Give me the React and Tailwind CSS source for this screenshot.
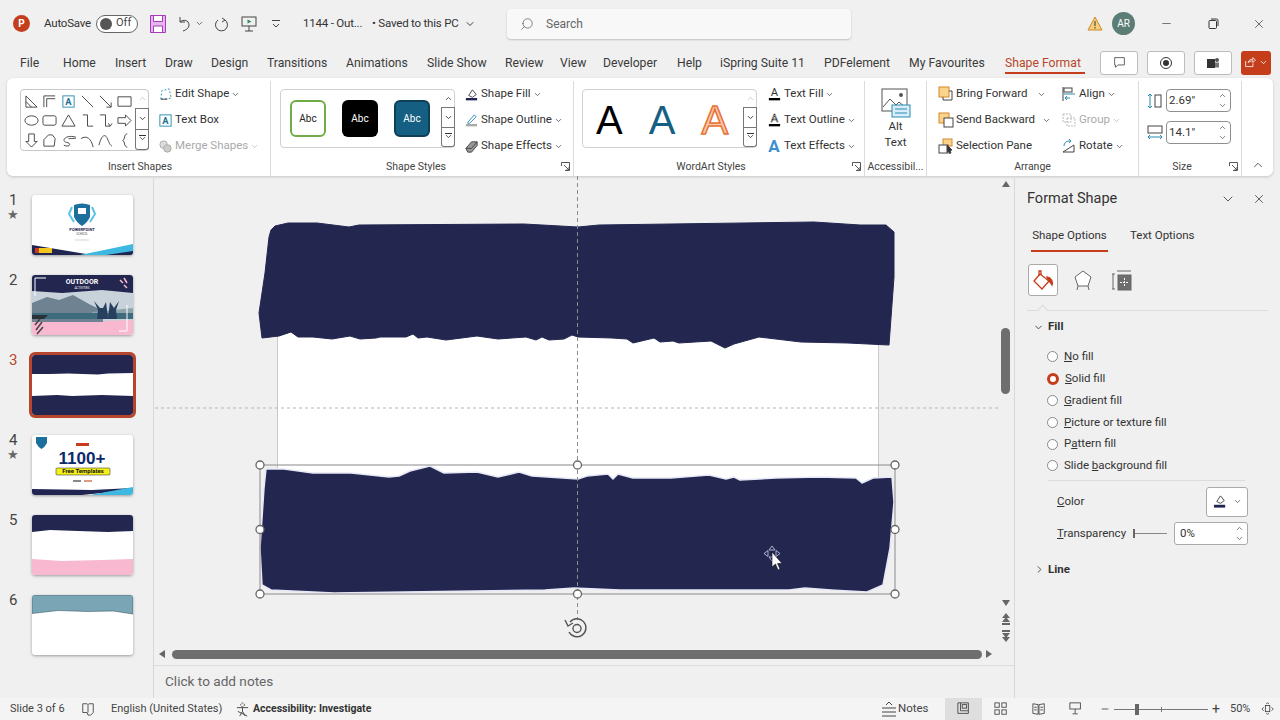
import React from 'react';
import { ChevronDown, ChevronRight, ChevronUp, X, Minus, Search } from 'lucide-react';

const font = { fontFamily: 'Roboto, "Noto Sans", sans-serif' };

// small line icon on a 16 box
const Ic = ({ s = 16, className = '', children, vb = '0 0 16 16' }) => (
  <svg width={s} height={s} viewBox={vb} fill="none" stroke="#444" strokeWidth="1" className={`shrink-0 ${className}`}>{children}</svg>
);

const Caret = ({ className = 'text-[#555]' }) => <ChevronDown size={9} strokeWidth={2.2} className={`shrink-0 ${className}`} />;

const tabs = [
  ['File', 43], ['Home', 52], ['Insert', 50], ['Draw', 46], ['Design', 56], ['Transitions', 79], ['Animations', 81], ['Slide Show', 78],
  ['Review', 55], ['View', 43], ['Developer', 74], ['Help', 43], ['iSpring Suite 11', 104], ['PDFelement', 85], ['My Favourites', 96],
];

const shapePaths = [
  'M2 2v12h12z M2 8l6 6', 'M2 14V2h12 M5 14V5h9', null, 'M2 2l12 12', 'M2 2l12 12 M14 9v5H9', 'M1 3h14v10H1z',
  'M1 8a7 5 0 1 0 14 0a7 5 0 1 0-14 0', 'M1 5q0-2 2-2h10q2 0 2 2v6q0 2-2 2H3q-2 0-2-2z', 'M8 2l7 12H1z', 'M3 2h5v12h6', 'M2 2h6v12h5 M11 11l2 3 2-3', 'M1 5h8V2l6 6-6 6v-3H1z',
  'M5 1h6v8h3l-6 6-6-6h3z', 'M2 14V7l5-5h4l3 4-1 8z', 'M3 13c6 3 9-2 3-3s-2-8 8-6-6 2-6 2', 'M1 6c6-4 11 0 13 9', 'M1 13C4 1 8 1 10 6s3 7 5 8', 'M11 1C7 1 9 7 6 8c3 1 1 7 5 7',
];

const ShapeGallery = () => (
  <div className="flex w-[129px] h-[62px] bg-white border border-[#c8c8c8] rounded-[4px]">
    <div className="grid grid-cols-6 w-[113px] pl-[1px] pt-[2px]">
      {shapePaths.map((d, i) => (
        <div key={i} className="flex items-center justify-center h-[19px]">
          {d ? (
            <Ic s={15}><path d={d} /></Ic>
          ) : (
            <Ic s={15}>
              <rect x="2" y="2" width="12" height="12" stroke="#2b8cb0" />
              <text x="8" y="12" fontSize="10" textAnchor="middle" fill="#1d6f93" stroke="none" fontWeight="700">A</text>
            </Ic>
          )}
        </div>
      ))}
    </div>
    <GalleryScroll />
  </div>
);

const GalleryScroll = ({ big }) => (
  <div className="flex flex-col w-[14px] ml-auto mr-[-1px] mt-[-1px]">
    <div className="flex-1 flex items-center justify-center"><ChevronUp size={9} strokeWidth={2} className={big ? 'text-[#333]' : 'text-[#bbb]'} /></div>
    <div className="flex-1 flex items-center justify-center border border-[#777] bg-white"><ChevronDown size={9} strokeWidth={2.4} className="text-[#333]" /></div>
    <div className="flex-1 flex flex-col items-center justify-center border border-t-0 border-[#777] bg-white rounded-b-[3px]">
      <div className="w-[7px] h-[1px] bg-[#333] mb-[1px]" />
      <ChevronDown size={9} strokeWidth={2.2} className="text-[#333] -mt-[3px]" />
    </div>
  </div>
);

const Launcher = () => (
  <svg width="9" height="9" viewBox="0 0 9 9" fill="none" stroke="#555" className="shrink-0">
    <path d="M.5 4V.5H8.500V8.500H4M3 3l5 5M8 5v3H5" />
  </svg>
);

const Tool = ({ icon, label, muted, chevron = true }) => (
  <div className={`flex items-center shrink-0 h-[26px] text-[11.5px] ${muted ? 'text-[#aaa]' : 'text-[#333]'}`}>
    <span className="w-[18px] flex justify-center shrink-0">{icon}</span>
    <span className="ml-[1px]">{label}</span>
    {chevron && <Caret className={`ml-[2px] ${muted ? 'text-[#bbb]' : 'text-[#555]'}`} />}
  </div>
);

const Group = ({ w, label, children, launcher, labelClass = '' }) => (
  <div style={{ width: w }} className="relative flex flex-col shrink-0 border-r border-[#dcdcdc] mt-[3px] last:border-r-0">
    <div className="flex-1 flex min-h-0">{children}</div>
    <div className={`h-[19px] flex items-center justify-center text-[10.5px] text-[#444] ${labelClass}`}>{label}</div>
    {launcher && <div className="absolute right-[3px] bottom-[5px]"><Launcher /></div>}
  </div>
);

const Stepper = () => (
  <div className="flex flex-col ml-auto mr-[3px] text-[#555]">
    <ChevronUp size={9} strokeWidth={2} />
    <ChevronDown size={9} strokeWidth={2} className="mt-[1px]" />
  </div>
);

const SizeField = ({ value, icon }) => (
  <div className="flex items-center gap-[3px]">
    {icon}
    <div className="flex items-center w-[65px] h-[23px] bg-white border border-[#8f8f8f] rounded-[4px] pl-[2px] text-[11.5px] text-[#333]">
      {value}<Stepper />
    </div>
  </div>
);

const TextIcon = ({ bar, outline }) => (
  <Ic s={15}>
    <text x="8" y="10" fontSize="12" textAnchor="middle" fill={outline ? '#fff' : '#333'} stroke={outline ? '#333' : 'none'} strokeWidth=".6">A</text>
    <path d="M2 13h12" stroke={bar} strokeWidth="2.5" />
  </Ic>
);

const Ribbon = () => (
  <div className="flex h-[98px] mx-[7px] bg-white rounded-[6px] shadow-[0_1px_3px_rgba(0,0,0,0.18)] shrink-0">
    <Group w={264} label="Insert Shapes" labelClass="pl-[3px]">
      <div className="flex pt-[8px] pl-[13px]">
        <ShapeGallery />
        <div className="flex flex-col ml-[7px] mt-[-8px]">
          <Tool label="Edit Shape" icon={<Ic s={15}><path d="M3 13l1-9 8-2 2 10z" strokeDasharray="2 2" stroke="#2b8cb0" /><path d="M3 13h7" /></Ic>} />
          <Tool label="Text Box" chevron={false} icon={<Ic s={15}><rect x="2" y="2" width="12" height="12" stroke="#2b8cb0" /><text x="8" y="12" fontSize="10" textAnchor="middle" fill="#1d6f93" stroke="none" fontWeight="700">A</text></Ic>} />
          <Tool label="Merge Shapes" muted icon={<Ic s={15}><circle cx="6" cy="6" r="4" stroke="#aaa" fill="#ddd" /><circle cx="10" cy="10" r="4" stroke="#aaa" fill="#ccc" /></Ic>} />
        </div>
      </div>
    </Group>
    <Group w={303} label="Shape Styles" labelClass="pr-[12px]" launcher>
      <div className="flex pt-[8px] pl-[9px]">
        <div className="flex w-[175px] h-[59px] bg-white border border-[#d0d0d0] rounded-[4px]">
          <div className="flex items-center gap-[16px] pl-[9px]">
            <div className="flex items-center justify-center w-[36px] h-[37px] rounded-[6px] border-2 border-[#70ad47] text-[10px] text-[#222]">Abc</div>
            <div className="flex items-center justify-center w-[36px] h-[37px] rounded-[6px] bg-black text-[10px] text-white">Abc</div>
            <div className="flex items-center justify-center w-[36px] h-[37px] rounded-[6px] bg-[#156082] border-2 border-[#0e3f56] text-[10px] text-white">Abc</div>
          </div>
          <GalleryScroll big />
        </div>
        <div className="flex flex-col ml-[7px] mt-[-8px]">
          <Tool label="Shape Fill" icon={<Ic s={15}><path d="M5 9l4-6 4 5-4 3z" /><path d="M2 13h12" stroke="#1f2550" strokeWidth="2.5" /></Ic>} />
          <Tool label="Shape Outline" icon={<Ic s={15}><path d="M4 10l7-8 2 2-7 7H4z" stroke="#2b8cb0" /><path d="M2 13h12" stroke="#aaa" strokeWidth="2.5" /></Ic>} />
          <Tool label="Shape Effects" icon={<Ic s={15}><path d="M2 10l6-7h6v4l-6 7H4z" fill="#999" /><path d="M2 10h6l6-7" /></Ic>} />
        </div>
      </div>
    </Group>
    <Group w={291} label="WordArt Styles" labelClass="pr-[16px]" launcher>
      <div className="flex pt-[8px] pl-[8px]">
        <div className="flex w-[175px] h-[59px] bg-white border border-[#d0d0d0] rounded-[4px]">
          <div className="flex items-center h-[59px] text-[40px] leading-none pl-[13px] gap-[26px]" style={{ fontFamily: '"Liberation Sans", sans-serif' }}>
            <span className="text-black">A</span>
            <span className="text-[#156082]">A</span>
            <span className="text-[#f8c9ae] [-webkit-text-stroke:1.5px_#e97132]">A</span>
          </div>
          <GalleryScroll />
        </div>
        <div className="flex flex-col ml-[8px] mt-[-8px]">
          <Tool label="Text Fill" icon={<TextIcon bar="#000" />} />
          <Tool label="Text Outline" icon={<TextIcon bar="#000" outline />} />
          <Tool label="Text Effects" icon={<span className="text-[17px] leading-none font-bold text-[#3d8fd1]">A</span>} />
        </div>
      </div>
    </Group>
    <Group w={62} label="Accessibil...">
      <div className="flex flex-col items-center w-full pt-[7px]">
        <Ic s={30} vb="0 0 30 30">
          <rect x="1" y="1" width="25" height="22" stroke="#555" fill="#fff" />
          <path d="M2 19l7-8 6 6 3-3 6 5" stroke="#555" />
          <circle cx="20" cy="7" r="2" fill="#555" stroke="none" />
          <rect x="11" y="17" width="18" height="12" fill="#d8ecf9" stroke="#2b8cb0" />
          <path d="M14 21h12M14 25h12" stroke="#2b8cb0" />
        </Ic>
        <div className="text-[11.5px] leading-[16px] text-[#333] text-center">Alt<br />Text</div>
      </div>
    </Group>
    <Group w={212} label="Arrange">
      <div className="flex pl-[10px]">
        <div className="flex flex-col w-[123px]">
          <div className="flex items-center"><Tool chevron={false} label="Bring Forward" icon={<Ic s={16}><rect x="1" y="1" width="10" height="10" fill="#fbd38b" stroke="#d18a2a" /><path d="M11 5h3v9H5v-3" /></Ic>} /><Caret className="ml-[10px] text-[#555]" /></div>
          <div className="flex items-center"><Tool chevron={false} label="Send Backward" icon={<Ic s={16}><rect x="1" y="1" width="10" height="10" fill="#fbd38b" stroke="#d18a2a" /><rect x="6" y="6" width="9" height="9" fill="#fff" /></Ic>} /><Caret className="ml-[7px] text-[#555]" /></div>
          <Tool chevron={false} label="Selection Pane" icon={<Ic s={16}><rect x="5" y="1" width="9" height="7" fill="#fbd38b" stroke="#d18a2a" /><rect x="1" y="7" width="9" height="8" fill="#fff" /><path d="M9 7l5 5-2 .5 1 2.500-1.500.5-1-2.500-1.500 1.500z" fill="#333" /></Ic>} />
        </div>
        <div className="flex flex-col">
          <Tool label="Align" icon={<Ic s={16}><path d="M2 1v14" /><rect x="3" y="2" width="8" height="4" /><path d="M3 8h11" stroke="#2b8cb0" /><path d="M9 12H4l2-2M4 12l2 2" stroke="#2b8cb0" /></Ic>} />
          <Tool label="Group" muted icon={<Ic s={16}><rect x="2" y="2" width="8" height="8" stroke="#bbb" strokeDasharray="2 1" /><rect x="6" y="6" width="8" height="8" stroke="#bbb" strokeDasharray="2 1" /></Ic>} />
          <Tool label="Rotate" icon={<Ic s={16}><path d="M2 14l11-7v7z" /><path d="M3 8a5 5 0 0 1 5-5h2M8 1l2 2-2 2" stroke="#2b8cb0" /></Ic>} />
        </div>
      </div>
    </Group>
    <Group w={103} label="Size" labelClass="pr-[16px]" launcher>
      <div className="flex flex-col pt-[8px] pl-[8px] gap-[9px]">
        <SizeField value={'2.69"'} icon={<Ic s={16}><path d="M3 1v14M1 3l2-2 2 2M1 13l2 2 2-2" stroke="#2b8cb0" /><rect x="8" y="2" width="6" height="12" /></Ic>} />
        <SizeField value={'14.1"'} icon={<Ic s={16}><rect x="1" y="1" width="14" height="7" /><path d="M1 12h14M3 10l-2 2 2 2M13 10l2 2-2 2" stroke="#2b8cb0" /></Ic>} />
      </div>
    </Group>
    <div className="flex-1 flex items-end justify-center pb-[4px]"><ChevronUp size={14} strokeWidth={1.5} className="text-[#444]" /></div>
  </div>
);

const TitleBar = () => (
  <div className="flex items-center h-[47px] shrink-0 text-[11.5px] text-[#333]">
    <div className="flex items-center justify-center ml-[13px] w-[17px] h-[17px] rounded-full bg-[#c43e1c] text-white text-[10px] font-bold">P</div>
    <span className="ml-[14px] w-[45px] tracking-[-0.2px]">AutoSave</span>
    <div className="flex items-center ml-[7px] w-[42px] h-[18px] rounded-full border border-[#666] bg-white pl-[3px]">
      <span className="w-[12px] h-[12px] rounded-full bg-[#555]" />
      <span className="ml-[4px] text-[11px] text-[#444]">Off</span>
    </div>
    <svg width="16" height="18" viewBox="0 0 16 18" className="ml-[12px] shrink-0" fill="none"><path d="M.5.5h15v17H.5z" fill="#e7b5ee" stroke="#a33cb8" /><path d="M3.500.5h9v6h-9zM3.500 11h9v6.500h-9z" fill="#fff" stroke="#a33cb8" /></svg>
    <Ic s={16} className="ml-[10px]"><path d="M4 1v5h5" /><path d="M4 6c3-3 9-2 9 3 0 3-3 5-6 6" /></Ic>
    <Caret className="ml-[3px] text-[#555]" />
    <Ic s={16} className="ml-[9px]"><path d="M9 2l3 2-3 2" /><path d="M12 4a6 6 0 1 1-7 0" /></Ic>
    <Ic s={16} className="ml-[12px]"><rect x="1" y="1" width="14" height="9" /><path d="M8 10v5M4 15h8" /><path d="M6.500 3.500l4 2-4 2z" fill="#2d8a5a" stroke="none" /></Ic>
    <svg width="10" height="10" viewBox="0 0 10 10" fill="none" stroke="#444" className="ml-[14px] shrink-0"><path d="M1 1.500h8M2 5l3 3 3-3" /></svg>
    <span className="ml-[22px] w-[59px] tracking-[-0.2px]">1144 - Out...</span>
    <span className="ml-[10px] w-[90px] tracking-[-0.2px]">• Saved to this PC</span>
    <ChevronDown size={12} className="ml-[2px] text-[#444]" />
    <div className="flex items-center ml-[31px] w-[344px] h-[30px] bg-[#f8f8f8] rounded-[4px] shadow-[0_1px_2px_rgba(0,0,0,0.2)] pl-[13px] text-[#666]">
      <Search size={14} strokeWidth={1.2} className="-scale-x-100 text-[#555]" />
      <span className="ml-[12px] text-[12px]">Search</span>
    </div>
    <svg width="16" height="15" viewBox="0 0 16 15" className="ml-[236px] shrink-0"><path d="M8 1l7 13H1z" fill="#f7cf7a" stroke="#c98a2a" /><path d="M8 5v5M8 11v1.500" stroke="#333" /></svg>
    <div className="flex items-center justify-center ml-[9px] w-[23px] h-[23px] rounded-full bg-[#5c7d75] text-white text-[10px]">AR</div>
    <Minus size={13} strokeWidth={1.2} className="ml-[25px] text-[#333]" />
    <svg width="11" height="11" viewBox="0 0 11 11" fill="none" stroke="#333" className="ml-[35px] shrink-0"><rect x="1" y="2.500" width="7.500" height="8" rx="1" /><path d="M3 1h5.500a1.500 1.500 0 0 1 1.500 1.500V8" /></svg>
    <X size={14} strokeWidth={1.2} className="ml-[33px] text-[#333]" />
  </div>
);

const ActionBtn = ({ children }) => (
  <div className="flex items-center justify-center w-[38px] h-[24px] bg-white border border-[#bdbdbd] rounded-[3px]">{children}</div>
);

const TabsRow = () => (
  <div className="flex items-center h-[31px] shrink-0 pl-[20px] text-[12.2px] text-[#3a3a3a]">
    {tabs.map(([t, w]) => (
      <span key={t} style={{ width: w }} className="mt-[1px]">{t}</span>
    ))}
    <span className="relative w-[80px] mt-[1px] text-[#b7472a]">
      Shape Format
      <span className="absolute left-0 right-0 top-[18px] h-[2px] bg-[#c43e1c]" />
    </span>
    <div className="flex items-center gap-[9px] ml-[15px]">
      <ActionBtn><Ic s={13}><path d="M2 2h12v9H6l-3 3v-3H2z" /></Ic></ActionBtn>
      <ActionBtn><span className="flex items-center justify-center w-[12px] h-[12px] rounded-full border border-[#333]"><span className="w-[6px] h-[6px] rounded-full bg-[#333]" /></span></ActionBtn>
      <ActionBtn><svg width="14" height="14" viewBox="0 0 14 14"><rect x="1" y="3" width="8" height="9" fill="#333" /><circle cx="11" cy="4" r="2" fill="#555" /><rect x="9" y="6.500" width="4" height="5" fill="#777" /></svg></ActionBtn>
      <div className="flex items-center justify-center gap-[2px] w-[30px] h-[24px] rounded-[3px] bg-[#c43e1c]">
        <Ic s={13}><path d="M2 6v7h9V9M5 8c1-3 3-4 6-4V2l3 3-3 3V6c-3 0-4 1-6 2z" stroke="#fff" /></Ic>
        <Caret className="text-white" />
      </div>
    </div>
  </div>
);

const Thumb = ({ n, star, active, children }) => (
  <div className="flex h-[60px]">
    <div className="w-[32px] pl-[9px] text-[15px] leading-[18px] mt-[-4px]">
      <div className={active ? 'text-[#b7472a]' : 'text-[#444]'}>{n}</div>
      {star && <div className="text-[13px] leading-[11px] text-[#666] ml-[-2px]">★</div>}
    </div>
    <div className={`w-[101px] h-[60px] rounded-[3px] bg-white overflow-hidden shadow-[0_1px_3px_rgba(0,0,0,0.35)] ${active ? 'outline-[3px] outline-[#b5452c]' : ''}`}>
      <svg width="101" height="60" viewBox="0 0 101 60">{children}</svg>
    </div>
  </div>
);

const Thumbnails = () => (
  <div className="flex flex-col w-[154px] shrink-0 gap-[20px] pt-[19px] border-r border-[#d8d8d8]">
    <Thumb n={1} star>
      <path d="M42 10q8-3 16 0v12q-3 6-8 9-5-3-8-9z" fill="#1d6f9c" />
      <path d="M40 12l-3 7 5 8M60 12l3 7-5 8" stroke="#5cc3e8" fill="none" strokeWidth="2" />
      <rect x="46" y="13" width="8" height="6" fill="#fff" />
      <text x="50" y="36" fontSize="4" fontWeight="700" textAnchor="middle" fill="#1f2550">POWERPOINT</text>
      <text x="50" y="40" fontSize="3" textAnchor="middle" fill="#555">SCHOOL</text>
      <path d="M43 45h14" stroke="#aaa" strokeWidth=".5" />
      <path d="M0 50l60 10H0z" fill="#1f2550" />
      <path d="M101 49v11H48z" fill="#3eb8e0" />
      <path d="M101 56v4H74z" fill="#1f2550" />
      <rect x="3" y="53" width="17" height="5" fill="#f2c61f" />
      <rect x="3" y="53" width="4" height="5" fill="#c83b1d" />
    </Thumb>
    <Thumb n={2}>
      <rect width="101" height="60" fill="#fff" />
      <rect width="101" height="22" fill="#23264f" />
      <rect y="44" width="101" height="16" fill="#f8b8d0" />
      <path d="M0 16l30 2 40-3 31 3v27l-30 1-40-1-31 1z" fill="#c7d2da" />
      <path d="M0 28l15-6 12 3 14-5 16 9 14 7v11H0z" fill="#6f8291" />
      <path d="M60 37l41-4v7H60z" fill="#8fa3ad" />
      <path d="M0 38h101v6H0z" fill="#3f6c7d" />
      <path d="M0 44h12l4-4H0z" fill="#2a3138" />
      <path d="M65 44l1-9-4-9 6 7 3 0 3-6 1 8 1 9zM76 44l1-9 1-8 4 6 5-7-3 9 1 9z" fill="#28405f" />
      <text x="50" y="9" fontSize="7" fontWeight="700" textAnchor="middle" fill="#fff">OUTDOOR</text>
      <text x="50" y="13.500" fontSize="3" textAnchor="middle" fill="#fff">ACTIVITIES</text>
      <path d="M14 3H3v18" stroke="#fff" fill="none" />
      <path d="M95 30v26H87" stroke="#fff" fill="none" />
      <path d="M88 5l3 3M92 3l3 5M92 10l3 3" stroke="#f8b8d0" strokeWidth="1.500" />
      <path d="M3 50l5-6M4 55l6-8M5 59l6-7" stroke="#444" strokeWidth="1.500" />
    </Thumb>
    <Thumb n={3} active>
      <rect width="101" height="60" fill="#fff" />
      <path d="M0 0h101v18l-25 .5-10 1-30-1-18 .5H0z" fill="#23264f" />
      <path d="M0 41l25-1 15 1 30-1 31 1v19H0z" fill="#23264f" />
    </Thumb>
    <Thumb n={4} star>
      <path d="M4 2h11v6q-2 4-5.500 6Q6 12 4 8z" fill="#1d6f9c" />
      <rect x="44" y="8" width="13" height="3" fill="#c83b1d" />
      <text x="50" y="29" fontSize="17" fontWeight="900" textAnchor="middle" fill="#0b2a6b" style={{ fontFamily: '"Liberation Sans", sans-serif' }}>1100+</text>
      <rect x="24" y="33" width="54" height="7" rx="1" fill="#f3f01c" stroke="#222" strokeWidth=".5" />
      <text x="51" y="38.300" fontSize="6" fontWeight="700" textAnchor="middle" fill="#111">Free Templates</text>
      <rect x="41" y="45" width="8" height="2" fill="#888" /><rect x="52" y="45" width="8" height="2" fill="#d98" />
      <path d="M0 54l60 1 41-2v2L50 60H0z" fill="#1f2550" />
      <path d="M101 52v8H58z" fill="#3eb8e0" />
    </Thumb>
    <Thumb n={5}>
      <path d="M0 0h101v16l-25 1-30-1-28-1-18 2z" fill="#23264f" />
      <path d="M0 44l30 2 40-1 31-1v16H0z" fill="#f8b8d0" />
    </Thumb>
    <Thumb n={6}>
      <path d="M0 0h101v19l-20-3-25 .5-30-1-26 3z" fill="#7aa5b5" stroke="#2a4a55" strokeWidth=".5" />
    </Thumb>
  </div>
);

const topShape = 'M271 230L275 226 288 223 317 223 349 227 359 225 524 224 578 227 599 225 814 222 860 225 886 225 894 232 894 277 889 345 848 343 801 342 759 337 734 344 725 348 711 341 679 343 673 341 660 342 654 338 633 343 627 339 612 338 578 337 572 335 564 339 549 340 542 337 536 340 526 337 498 339 477 336 446 340 427 337 418 338 413 334 406 337 380 337 376 338 360 339 350 336 332 339 313 337 298 337 291 332 279 336 262 338 259 313 265 273 269 237Z';
const bottomShape = 'M266 469L284 469 313 473 351 473 389 477 399 476 410 471 430 466 444 473 477 472 498 477 519 472 532 476 578 479 587 476 608 474 613 479 618 474 633 478 671 478 709 475 726 479 734 477 740 480 776 478 818 477 856 478 862 483 873 478 892 477 894 502 890 548 883 585 867 592 831 590 805 588 789 590 620 590 574 588 545 590 334 593 271 590 262 585 260 548 264 488Z';

const handles = [[260, 465], [577.5, 465], [895, 465], [260, 529.5], [895, 529.5], [260, 594], [577.5, 594], [895, 594]];

const Stage = () => (
  <div className="relative flex-1 overflow-hidden">
    <div className="absolute left-[123px] top-[62px] w-[602px] h-[338px] bg-white border border-[#c9c9c9]" />
    <svg width="844" height="470" viewBox="154 176 844 470" className="absolute inset-0">
      <path d="M155 408H998" stroke="#b5b5b5" strokeDasharray="3 3" />
      <path d={topShape} fill="#23264f" stroke="#23264f" strokeLinejoin="round" />
      <path d={bottomShape} fill="#23264f" stroke="#e6e8f6" strokeWidth="1.5" strokeLinejoin="round" />
      <path d="M577.500 176V620" stroke="#8c8c8c" strokeDasharray="4 3" />
      <rect x="260" y="465" width="635" height="129" fill="none" stroke="#8a8a8a" />
      {handles.map(([x, y]) => <circle key={`${x}-${y}`} cx={x} cy={y} r="4" fill="#fff" stroke="#666" strokeWidth="1.300" />)}
      <g fill="none" stroke="#555" strokeWidth="1.400">
        <path d="M570 622a9 9 0 1 1-1 10" />
        <circle cx="577" cy="628.500" r="4" />
        <path d="M565 620l3 6 5-3" />
      </g>
      <path d="M772 546l3 4h-6zM772 561l3-4h-6zM764 553.500l4-3v6zM780 553.500l-4-3v6z" stroke="#cfd3ee" strokeWidth=".8" fill="#23264f" />
      <path d="M772 552v15l3.500-3 2.500 6 2-1-2.500-5.500h4.500z" fill="#fff" stroke="#111" strokeWidth=".6" />
    </svg>
  </div>
);

const VScroll = () => (
  <div className="flex flex-col items-center w-[16px] shrink-0 pr-[1px]">
    <span className="w-0 h-0 mt-[5px] border-x-[4px] border-x-transparent border-b-[6px] border-b-[#666]" />
    <span className="w-[9px] h-[66px] mt-[141px] rounded-full bg-[#6e6e6e]" />
    <span className="w-0 h-0 mt-[206px] border-x-[4px] border-x-transparent border-t-[6px] border-t-[#666]" />
    <svg width="10" height="12" viewBox="0 0 10 12" className="mt-[7px]" fill="#666"><path d="M5 0l4 5H1zM5 4l4 5H1z" /><rect x="1" y="10" width="8" height="2" /></svg>
    <svg width="10" height="12" viewBox="0 0 10 12" className="mt-[5px]" fill="#666"><rect x="1" width="8" height="2" /><path d="M5 12L1 7h8zM5 8L1 3h8z" /></svg>
  </div>
);

const HScroll = () => (
  <div className="flex items-center h-[16px] shrink-0 pl-[5px] mt-[-1px]">
    <span className="w-0 h-0 border-y-[4px] border-y-transparent border-r-[6px] border-r-[#666]" />
    <span className="h-[9px] w-[810px] ml-[7px] rounded-full bg-[#6e6e6e]" />
    <span className="w-0 h-0 ml-[4px] border-y-[4px] border-y-transparent border-l-[6px] border-l-[#666]" />
  </div>
);

const Radio = ({ on, children }) => (
  <div className="flex items-center h-[21.8px] text-[11.5px] text-[#333]">
    {on ? (
      <span className="w-[12px] h-[12px] rounded-full bg-white border-[3px] border-[#c43e1c]" />
    ) : (
      <span className="w-[11px] h-[11px] rounded-full bg-white border border-[#888]" />
    )}
    <span className="ml-[6px]">{children}</span>
  </div>
);

const FormatPane = () => (
  <div className="flex flex-col w-[266px] shrink-0 border-l border-[#d8d8d8] pl-[12px] text-[#333]">
    <div className="flex items-center h-[22px] mt-[12px]">
      <span className="w-[90px] text-[14.5px]">Format Shape</span>
      <ChevronDown size={16} strokeWidth={1.2} className="ml-[103px]" />
      <X size={14} strokeWidth={1.3} className="ml-[16px]" />
    </div>
    <div className="flex mt-[17px] pl-[4px] text-[11.5px]">
      <div className="w-[77px] h-[25px] border-b-2 border-[#c43e1c] flex justify-center">Shape Options</div>
      <div className="ml-[22px]">Text Options</div>
    </div>
    <div className="flex items-center mt-[12px] pl-[1px]">
      <div className="flex items-center justify-center w-[30px] h-[32px] bg-white border border-[#aaa] rounded-[3px]">
        <svg width="24" height="24" viewBox="0 0 24 24" fill="none" stroke="#c43e1c" strokeWidth="1.300"><path d="M9 6l9 7-7 8-8-8z" fill="#fff" /><path d="M10 7V3h-2v5" /><path d="M16 9c5 1 6 5 5 8-1-2-2-3-4-5z" fill="#c43e1c" /></svg>
      </div>
      <svg width="22" height="24" viewBox="0 0 22 24" fill="none" stroke="#666" className="ml-[14px]"><path d="M11 3l8 6-3 9H6L3 9z" fill="#fff" /><path d="M6 18l-1 4M16 18l1 4" /></svg>
      <svg width="22" height="22" viewBox="0 0 22 22" fill="none" stroke="#666" className="ml-[17px]"><path d="M6 2h14M2 5v15M1 5h3M1 20h3" /><rect x="7" y="6" width="13" height="15" fill="#6d6d6d" /><path d="M13.500 9v9M9 13.500h9" stroke="#fff" strokeDasharray="2 1" /></svg>
    </div>
    <div className="relative h-[1px] w-[241px] mt-[14px] bg-[#dcdcdc]">
      <span className="absolute left-[12px] top-[-4px] w-[7px] h-[7px] rotate-45 bg-[#f0f0f0] border-l border-t border-[#dcdcdc]" />
    </div>
    <div className="flex items-center h-[18px] mt-[7px] pl-[6px]">
      <ChevronDown size={11} strokeWidth={1.8} />
      <span className="ml-[4px] text-[11.5px] font-bold">Fill</span>
    </div>
    <div className="flex flex-col pl-[20px] mt-[10px]">
      <Radio><u>N</u>o fill</Radio>
      <Radio on><u>S</u>olid fill</Radio>
      <Radio><u>G</u>radient fill</Radio>
      <Radio><u>P</u>icture or texture fill</Radio>
      <Radio>P<u>a</u>ttern fill</Radio>
      <Radio>Slide <u>b</u>ackground fill</Radio>
    </div>
    <div className="h-[1px] w-[197px] ml-[21px] mt-[3px] bg-[#dcdcdc]" />
    <div className="flex items-center justify-between w-[191px] ml-[30px] mt-[6px] text-[11.5px]">
      <span><u>C</u>olor</span>
      <div className="flex items-center justify-center gap-[5px] w-[42px] h-[30px] bg-white border border-[#aaa] rounded-[3px]">
        <Ic s={15}><path d="M4 8l4-6 4 5-4 3z" /><path d="M1 13h12" stroke="#1f2550" strokeWidth="3" /></Ic>
        <Caret />
      </div>
    </div>
    <div className="flex items-center w-[191px] ml-[30px] mt-[5px] text-[11.5px]">
      <span className="w-[76px]"><u>T</u>ransparency</span>
      <div className="relative w-[34px] h-[1px] bg-[#888]"><span className="absolute left-0 top-[-4px] w-[2px] h-[9px] bg-[#666]" /></div>
      <div className="flex items-center ml-auto w-[74px] h-[23px] bg-white border border-[#aaa] rounded-[3px] pl-[5px]">0%<Stepper /></div>
    </div>
    <div className="flex items-center mt-[16px] pl-[7px]">
      <ChevronRight size={11} strokeWidth={1.8} />
      <span className="ml-[3px] text-[11.5px] font-bold">Line</span>
    </div>
  </div>
);

const StatusBar = () => (
  <div className="flex items-center h-[22px] shrink-0 bg-[#f4f4f4] text-[11px] text-[#444] pl-[10px]">
    <span className="w-[55px]">Slide 3 of 6</span>
    <Ic s={14} className="ml-[16px]"><path d="M2 2h5l1 1 1-1h5v10l-3 3H8l-1-3H2zM8 3v9" /></Ic>
    <span className="ml-[16px] w-[109px]">English (United States)</span>
    <Ic s={15} className="ml-[15px]"><circle cx="8" cy="3" r="2" strokeDasharray="1.500 1" /><path d="M2 6h12M8 6v4l-3 5M8 10l3 5M3 10l10 5" /></Ic>
    <span className="ml-[3px] w-[119px] text-[10.5px] font-bold text-[#333]">Accessibility: Investigate</span>
    <Ic s={16} className="ml-[509px]"><path d="M1 7h14M1 11h14M1 15h14M5 4l3-3 3 3" /></Ic>
    <span className="ml-[1px] w-[29px] text-[11.5px]">Notes</span>
    <div className="flex items-center justify-center ml-[18px] w-[37px] h-[22px] bg-[#dedede]">
      <Ic s={14}><path d="M1 1h12v12H1zM4 1v9h9" /><rect x="6" y="3" width="5" height="4" /></Ic>
    </div>
    <Ic s={14} className="ml-[12px]"><rect x="1" y="1" width="5" height="5" /><rect x="9" y="1" width="5" height="5" /><rect x="1" y="9" width="5" height="5" /><rect x="9" y="9" width="5" height="5" /></Ic>
    <Ic s={14} className="ml-[24px]"><path d="M1 2l6 1v11l-6-1zM14 2l-6 1v11l6-1zM2.500 6h3M2.500 9h3M9.500 6h3M9.500 9h3" /></Ic>
    <Ic s={14} className="ml-[23px]"><rect x="1" y="1" width="12" height="7" /><path d="M7 8v5M4 13.500h6" /></Ic>
    <Minus size={10} className="ml-[17px]" />
    <div className="relative ml-[4px] w-[94px] h-[1px] bg-[#777]">
      <span className="absolute left-[21px] top-[-5px] w-[4px] h-[11px] bg-[#666]" />
      <span className="absolute left-[47px] top-[-2px] w-[1px] h-[5px] bg-[#777]" />
    </div>
    <span className="ml-[4px] text-[14px] leading-none">+</span>
    <span className="ml-[10px] w-[20px]">50%</span>
    <Ic s={14} className="ml-[11px]"><rect x="5" y="4" width="5" height="7" /><path d="M3 6l-2 2 2 2M12 6l2 2-2 2M6 2l1.500-1L9 2M6 13l1.500 1L9 13" /></Ic>
  </div>
);

export default function App() {
  return (
    <div className="flex flex-col w-[1280px] h-[720px] overflow-hidden bg-[#f0f0f0] whitespace-nowrap" style={font}>
      <TitleBar />
      <TabsRow />
      <Ribbon />
      <div className="flex flex-1 min-h-0">
        <Thumbnails />
        <div className="flex flex-col w-[860px] shrink-0">
          <div className="flex flex-1 min-h-0">
            <Stage />
            <VScroll />
          </div>
          <HScroll />
          <div className="h-[33px] shrink-0 mt-[3px] border-t border-[#dedede] pl-[11px] pt-[3px] text-[13.6px] text-[#666] leading-[24px]">Click to add notes</div>
        </div>
        <FormatPane />
      </div>
      <StatusBar />
    </div>
  );
}
